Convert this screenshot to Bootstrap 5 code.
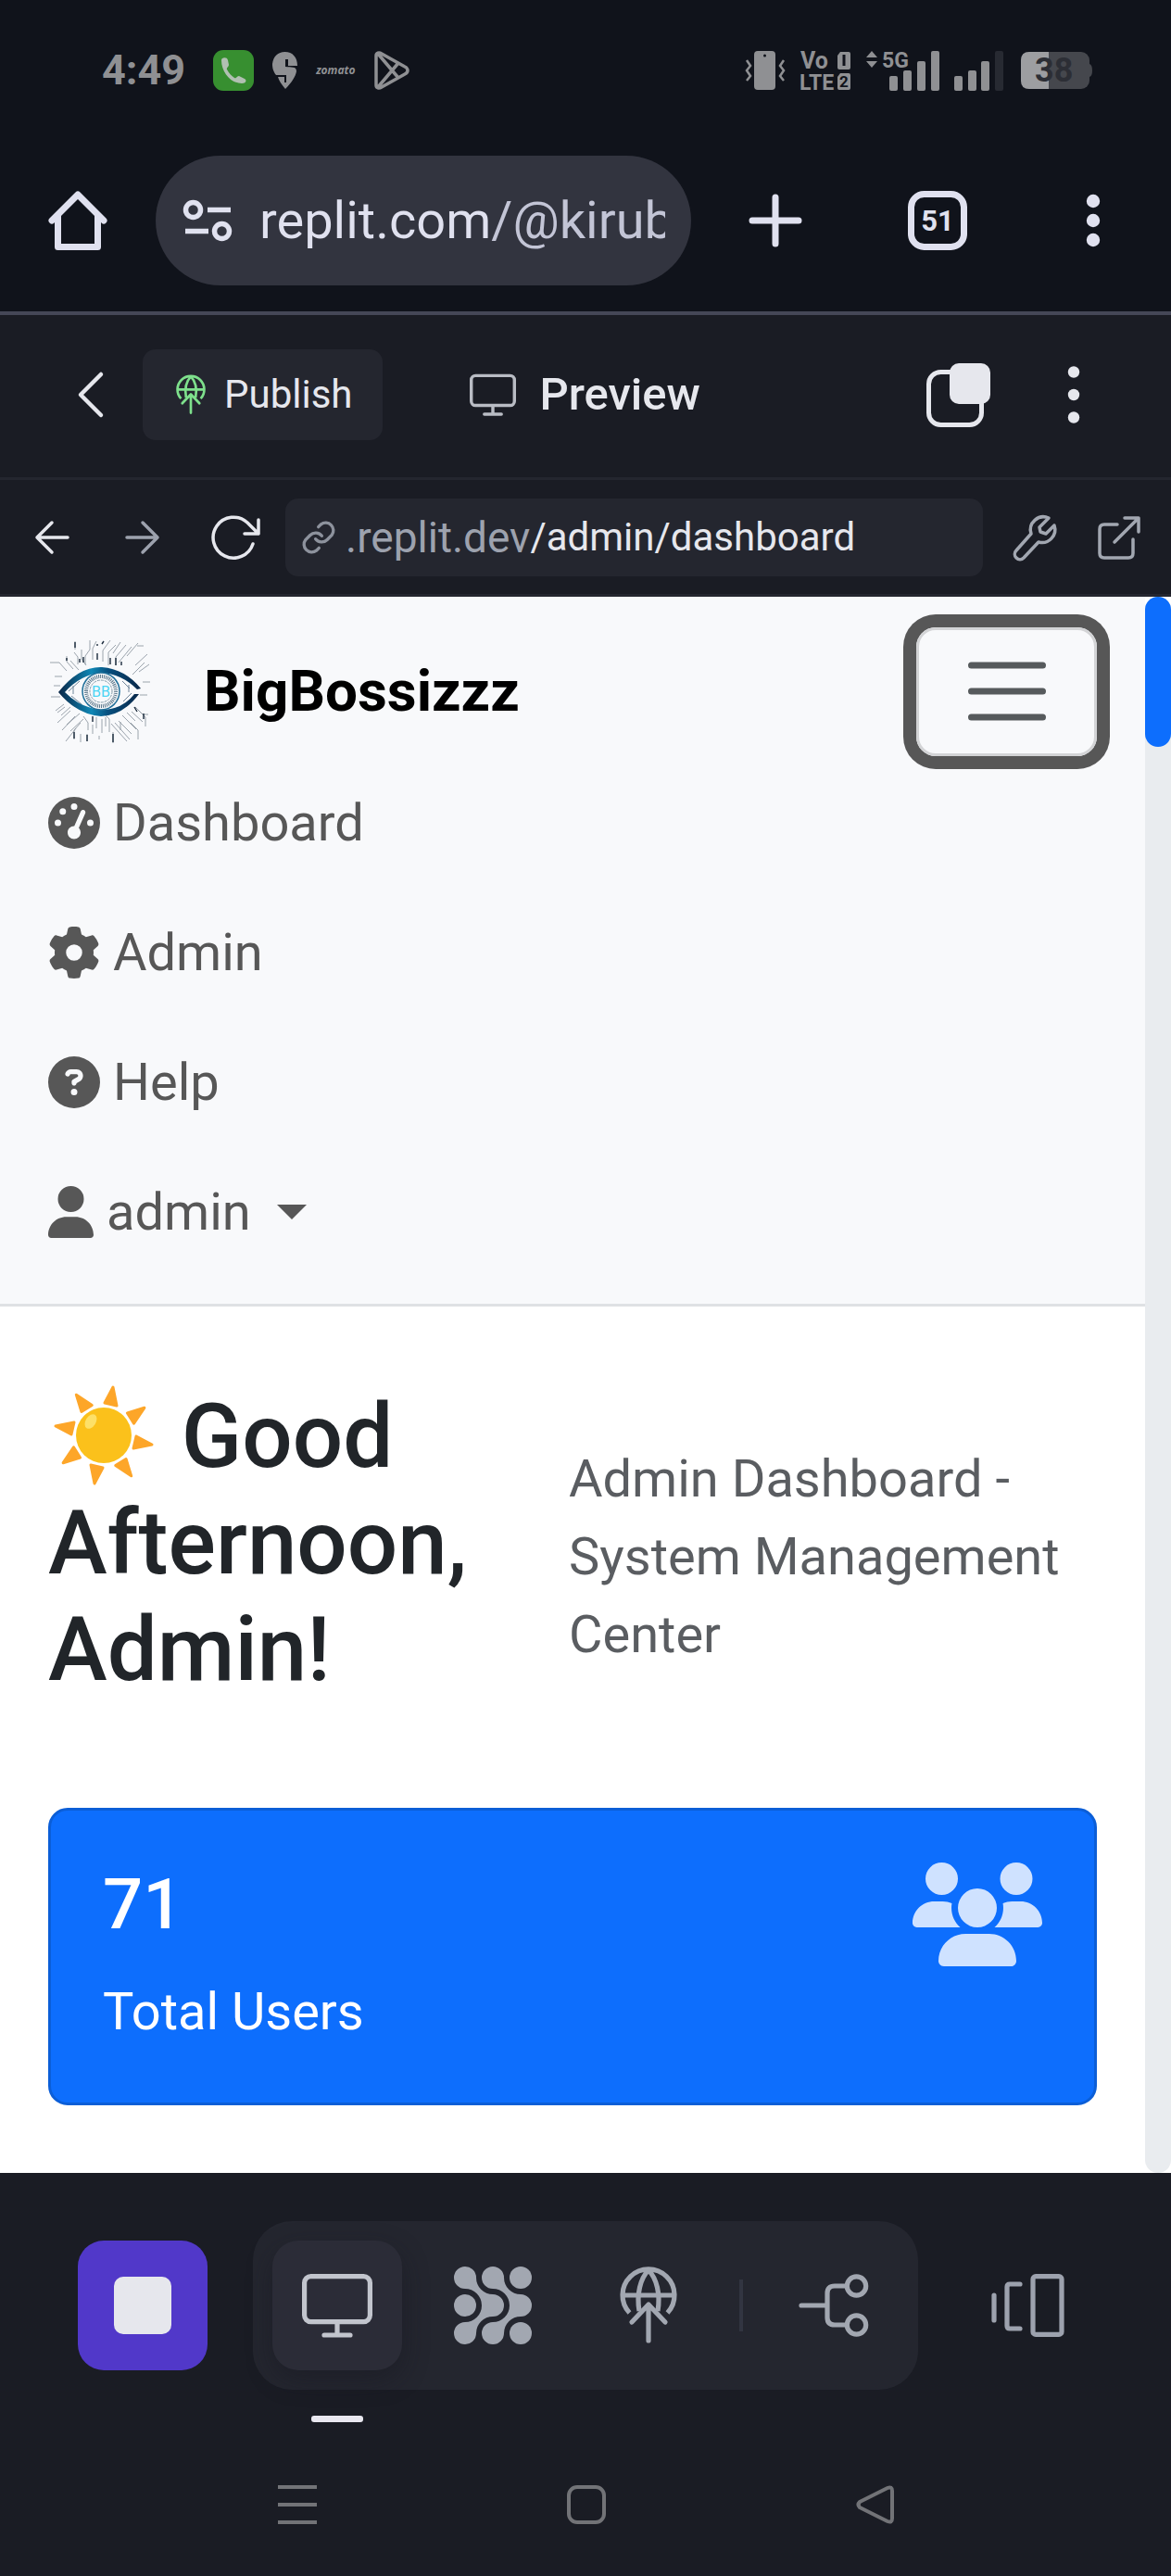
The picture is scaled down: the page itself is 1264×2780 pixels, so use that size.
<!DOCTYPE html>
<html lang="en">
<head>
<meta charset="utf-8">
<meta name="viewport" content="width=device-width, initial-scale=1">
<title>BigBossizzz – Admin Dashboard</title>
<link href="https://cdn.jsdelivr.net/npm/bootstrap@5.3.0/dist/css/bootstrap.min.css" rel="stylesheet">
<style>
  html { font-size: 56px; }
  body { font-family: Roboto, "Liberation Sans", sans-serif; background: #1a1c24; line-height: 84px; }
  svg { display: block; flex-shrink: 0; overflow: visible; }
  button { line-height: 1; }
  .bare { background: none; border: 0; padding: 0; color: inherit; display: flex; align-items: center; justify-content: center; flex-shrink: 0; }
  .slot { width: 84px; height: 84px; }

  /* phone status bar */
  .statusbar { background: #10131b; height: 140px; padding: 12px 86px 0 110px; color: #8f9093; }
  .clock { font-size: 45px; font-weight: 700; line-height: 48px; margin-right: 10px; }
  .status-left { gap: 20px; }
  .status-right { gap: 16px; }
  .tiny-brand { font-family: "Open Sans", sans-serif; font-size: 12px; line-height: 20px; font-weight: 700; font-style: italic; }

  /* browser toolbar */
  .browser { background: #10131b; height: 200px; padding: 0 42px; color: #e0e1ef; border-bottom: 4px solid #454757; }
  .browser-tools { gap: 84px; margin-left: 49px; }
  .add-tab { margin-right: 7px; }
  .omnibox { background: #32343f; height: 140px; border-radius: 70px; padding: 0 28px 0 30px; gap: 30px; margin-left: 42px; min-width: 0; }
  .omnibox input { min-width: 0; width: 100%; border: 0; outline: 0; padding: 0; font-size: 56px; line-height: 84px;
    color: transparent; background: linear-gradient(90deg, #e0e1ef 251px, #c3c5d6 251px); -webkit-background-clip: text; background-clip: text; }

  /* workspace header */
  .workspace { height: 178px; padding: 0 63px 3px 56px; color: #e6e7ed; border-bottom: 3px solid #24262f; }
  .publish { background: #24262f; border: 0; border-radius: 14px; height: 98px; padding: 0 33px 0 36px; color: #e6e7ed; font-size: 42px; gap: 20px; margin-left: 14px; }
  .preview-tab { font-size: 49px; font-weight: 500; gap: 25px; margin-left: 94px; line-height: 56px; }
  .workspace-tools { gap: 40px; }
  .address { height: 126px; padding: 0 33px 0 14px; color: #e6e7ed; border-bottom: 3px solid #24262f; }
  .address-nav { gap: 14px; margin-right: 14px; }
  .address-box { background: #24262f; border-radius: 14px; height: 84px; padding: 0 14px 0 16px; min-width: 0; }
  .address-box label { font-size: 46px; line-height: 56px; color: #9da2ae; margin-left: 9px; }
  .address-box input { min-width: 0; width: 100px; border: 0; outline: 0; background: none; padding: 0; color: #e6e7ed; font-size: 42px; line-height: 56px; }
  .address-tools { gap: 43px; margin-left: 33px; color: #a2a7b1; }
  .dim { color: #9da2ae; }

  /* previewed site */
  .site { background: #fff; }
  .site-nav { background: #f8f9fb; border-bottom: 3px solid #dfe1e4; padding: 30px 52px 29px; }
  .brand-row { height: 144px; }
  .brand-name { font-size: 62px; font-weight: 700; color: #000; gap: 56px; }
  .menu-toggle { width: 195px; height: 139px; border: 3px solid #d3d4d6; border-radius: 21px; box-shadow: 0 0 0 14px #575757; color: #565a5c; background: none; padding: 0; }
  .site-nav .nav-link { color: #575757; font-size: 56px; line-height: 84px; padding: 28px 0; gap: 14px; }
  .menu-caret { width: 0; height: 0; border: 16px solid transparent; border-top-color: #575757; border-bottom: 0; margin-left: 14px; }
  .hero { padding: 83px 52px 0; }
  .hero h1 { font-size: 96px; line-height: 115px; font-weight: 500; color: #212529; margin: 0 0 28px; width: 534px; }
  .hero h1 svg { display: inline-block; vertical-align: -21px; }
  .hero p { color: #5a5d61; margin: 0; }
  .stat { background: #0d6efd; border: 3px solid #0b5ed7; border-radius: 21px; color: #fff; margin: 85px 52px 73px; }
  .stat .card-body { padding: 56px; }
  .stat h2 { font-size: 76px; line-height: 91px; font-weight: 500; margin: 0 0 28px; }
  .scroll-track { width: 28px; background: #e9ecef; border-radius: 14px; }
  .scroll-thumb { height: 162px; background: #0d6efd; border-radius: 14px; }

  /* bottom dock */
  .dock-row { padding: 52px 84px 0; }
  .tile { width: 140px; height: 140px; border-radius: 28px; }
  .stop { background: #5138c9; }
  .stop-mark { width: 62px; height: 62px; border-radius: 10px; background: #e6e7ed; }
  .dock { background: #24262f; border-radius: 42px; padding: 21px; gap: 28px; color: #a2a7b1; }
  .dock .current { background: #2b2c37; color: #c2c5cd; box-shadow: 0 10px 28px rgba(20, 20, 30, .4); }
  .dock-rule { width: 4px; height: 56px; background: #323541; }
  .page-mark { width: 56px; height: 7px; border-radius: 3px; background: #e9e8f0; margin: 28px 0 0 336px; }
  .system-nav { padding: 68px 298px 56px 300px; color: #727377; }
</style>
<script src="https://cdn.jsdelivr.net/npm/bootstrap@5.3.0/dist/js/bootstrap.bundle.min.js"></script>
</head>
<body>

<svg width="0" height="0" class="position-absolute" aria-hidden="true">
  <symbol id="globe-up" viewBox="0 0 62 84">
    <path d="M10.500 50A28 28 0 1 1 51.500 50M3 31H59M31 4C22 13 18 30 21 48M31 4C40 13 44 30 41 48" fill="none" stroke="currentColor" stroke-width="5.200"/>
    <path d="M13 60L31 41L49 60M31 42V80" fill="none" stroke="currentColor" stroke-width="5.200" stroke-linecap="round" stroke-linejoin="round"/>
  </symbol>
  <symbol id="monitor" viewBox="0 0 76 70">
    <g fill="none" stroke="currentColor" stroke-width="5.200" stroke-linecap="round"><rect x="2.600" y="3.600" width="70.800" height="49" rx="7"/><path d="M38 53V67M24 67H52"/></g>
  </symbol>
</svg>

<div class="statusbar d-flex align-items-center justify-content-between">
  <div class="status-left d-flex align-items-center">
    <span class="clock">4:49</span>
    <svg width="44" height="44" viewBox="0 0 44 44"><rect width="44" height="44" rx="11" fill="#378f30"/><path d="M9 11C9 8 15 7 16 11L17 16C17 18 14 19 15 21C17 25 20 28 23 30C25 31 26 28 28 28L34 31C37 33 35 36 31 36C19 36 9 24 9 11Z" fill="#b1c0b2"/></svg>
    <svg width="27" height="40" viewBox="0 0 27 40"><path d="M13.500 0C22 0 27 6 27 15H17V8H14V16C20 17 26 15 26 21C25 27 20 34 14 40C10 35 7 31 6 27H13V33H15V25H4C0 20 0 15 0 13C1 5 6 0 13.500 0Z" fill="currentColor"/></svg>
    <span class="tiny-brand">zomato</span>
    <svg width="38" height="42" viewBox="0 0 38 42"><path d="M2 5C2 2 5 1 8 3L33 17C37 19 37 23 33 25L8 39C5 41 2 40 2 37ZM4 3L26 29M4 39L26 13" fill="none" stroke="currentColor" stroke-width="3.500"/></svg>
  </div>
  <div class="status-right d-flex align-items-center">
    <svg width="44" height="44" viewBox="0 0 44 44"><rect x="10" y="1" width="23" height="42" rx="4" fill="currentColor"/><circle cx="21.500" cy="6" r="1.500" fill="#10131b"/><path d="M2 11L6 17L2 22L6 28L2 33M42 11L38 17L42 22L38 28L42 33" fill="none" stroke="currentColor" stroke-width="2.500"/></svg>
    <svg width="54" height="44" viewBox="0 0 54 44"><g font-family="Roboto, sans-serif" font-weight="700" fill="currentColor"><text x="0" y="20" font-size="25">Vo</text><text x="-1" y="43" font-size="23">LTE</text></g><path d="M43 2H52Q54 2 54 4V19Q54 21 52 21H42Q40 21 40 19V6ZM43 25H52Q54 25 54 27V41Q54 43 52 43H42Q40 43 40 41V29Z" fill="currentColor"/><path d="M47 5V17" stroke="#10131b" stroke-width="3"/><text x="42" y="40" font-family="Roboto, sans-serif" font-weight="700" font-size="17" fill="#10131b">2</text></svg>
    <svg width="80" height="44" viewBox="0 0 80 44" fill="currentColor"><path d="M7 1L13 8H1ZM7 19L13 12H1Z"/><text x="18" y="19" font-family="Roboto, sans-serif" font-weight="700" font-size="23">5G</text><rect x="26" y="28" width="9" height="16" rx="2"/><rect x="41" y="22" width="9" height="22" rx="2"/><rect x="56" y="12" width="9" height="32" rx="2"/><rect x="71" y="1" width="9" height="43" rx="2"/></svg>
    <svg width="54" height="44" viewBox="0 0 54 44" fill="currentColor"><rect x="0" y="28" width="9" height="16" rx="2"/><rect x="15" y="22" width="9" height="22" rx="2"/><rect x="29" y="12" width="9" height="32" rx="2"/><rect x="44" y="1" width="9" height="43" rx="2" fill="#272a32"/></svg>
    <svg width="78" height="42" viewBox="0 0 78 42"><rect x="2" y="1" width="74" height="40" rx="9" fill="#45474d"/><path d="M76 14Q79 15 79 21T76 28Z" fill="#45474d"/><path d="M11 1H32V41H11Q2 41 2 32V10Q2 1 11 1Z" fill="#9d9ea1"/><text x="17" y="33" font-family="Roboto, sans-serif" font-weight="700" font-size="36" fill="#2c2e35">38</text></svg>
  </div>
</div>

<div class="browser d-flex align-items-center">
  <button class="bare slot" aria-label="Home"><svg width="64" height="66" viewBox="0 0 64 66" fill="none" stroke="currentColor" stroke-width="7" stroke-linecap="round" stroke-linejoin="round"><path d="M4 33L32 5L60 33M10.500 28V61.500H53.500V28"/></svg></button>
  <div class="omnibox d-flex align-items-center flex-grow-1">
    <svg width="52" height="46" viewBox="0 0 52 46" fill="none" stroke="#e0e1ef" stroke-width="5.500"><circle cx="10.500" cy="11.500" r="8"/><circle cx="41.500" cy="34.500" r="8"/><path d="M26 11.500H51M2 34.500H27"/></svg>
    <input type="text" aria-label="Web address" value="replit.com/@kirub">
  </div>
  <div class="browser-tools d-flex align-items-center">
    <button class="bare slot add-tab" aria-label="New tab"><svg width="58" height="58" viewBox="0 0 58 58" stroke="currentColor" stroke-width="7" stroke-linecap="round"><path d="M29 4V54M4 29H54"/></svg></button>
    <button class="bare slot" aria-label="Open tabs"><svg width="64" height="64" viewBox="0 0 64 64"><rect x="3.500" y="3.500" width="57" height="57" rx="14" fill="none" stroke="currentColor" stroke-width="7"/><text x="32" y="43" text-anchor="middle" font-family="Roboto, sans-serif" font-size="31" font-weight="700" fill="currentColor">51</text></svg></button>
    <button class="bare slot" aria-label="Browser menu"><svg width="16" height="58" viewBox="0 0 16 58" fill="currentColor"><circle cx="8" cy="8" r="7.200"/><circle cx="8" cy="29" r="7.200"/><circle cx="8" cy="50" r="7.200"/></svg></button>
  </div>
</div>

<div class="workspace d-flex align-items-center">
  <button class="bare slot" aria-label="Back"><svg width="28" height="50" viewBox="0 0 28 50" fill="none" stroke="currentColor" stroke-width="4.500" stroke-linecap="round" stroke-linejoin="round"><path d="M25 3L3 25L25 47"/></svg></button>
  <button class="publish d-flex align-items-center"><svg width="32" height="44" color="#7ee08c"><use href="#globe-up"/></svg>Publish</button>
  <div class="preview-tab d-flex align-items-center"><svg width="50" height="48" color="#b9bcc4"><use href="#monitor"/></svg>Preview</div>
  <div class="workspace-tools d-flex align-items-center ms-auto">
    <button class="bare slot" aria-label="Windows"><svg width="70" height="70" viewBox="0 0 70 70"><rect x="2.500" y="10.500" width="57" height="57" rx="13" fill="none" stroke="currentColor" stroke-width="5"/><rect x="25" y="1" width="44" height="44" rx="10" fill="currentColor"/></svg></button>
    <button class="bare slot" aria-label="Workspace menu"><svg width="14" height="62" viewBox="0 0 14 62" fill="currentColor"><circle cx="7" cy="6.500" r="6.200"/><circle cx="7" cy="31" r="6.200"/><circle cx="7" cy="55.500" r="6.200"/></svg></button>
  </div>
</div>

<div class="address d-flex align-items-center">
  <div class="address-nav d-flex">
    <button class="bare slot" aria-label="Go back"><svg width="38" height="38" viewBox="0 0 38 38" fill="none" stroke="currentColor" stroke-width="3.500" stroke-linecap="round" stroke-linejoin="round"><path d="M36 19H3M19 3L3 19L19 35"/></svg></button>
    <button class="bare slot dim" aria-label="Go forward"><svg width="38" height="38" viewBox="0 0 38 38" fill="none" stroke="currentColor" stroke-width="3.500" stroke-linecap="round" stroke-linejoin="round"><path d="M2 19H35M19 3L35 19L19 35"/></svg></button>
    <button class="bare slot" aria-label="Reload"><svg width="52" height="56" viewBox="-2 -4 52 56" fill="none" stroke="currentColor" stroke-width="3.500" stroke-linecap="round" stroke-linejoin="round"><path d="M45 31A22 22 0 1 1 39 8L51 20M51 5V20H36"/></svg></button>
  </div>
  <div class="address-box d-flex align-items-center flex-grow-1">
    <svg width="40" height="40" viewBox="0 0 24 24" fill="none" stroke="#8d929d" stroke-width="2" stroke-linecap="round"><path d="M10 13a5 5 0 0 0 7.500 .5l3-3a5 5 0 0 0-7-7l-1.700 1.700M14 11a5 5 0 0 0-7.500-.5l-3 3a5 5 0 0 0 7 7l1.700-1.700"/></svg>
    <label for="path">.replit.dev</label><input id="path" class="flex-grow-1" type="text" value="/admin/dashboard">
  </div>
  <div class="address-tools d-flex align-items-center">
    <button class="bare" aria-label="Developer tools"><svg width="48" height="50" viewBox="0 0 48 50" fill="none" stroke="currentColor" stroke-width="3.500" stroke-linejoin="round"><path d="M38 4A14 14 0 0 0 19 21L3 39A5.500 5.500 0 0 0 11 47L27 30A14 14 0 0 0 44 12L35 21L29 19L28 14Z"/></svg></button>
    <button class="bare" aria-label="Open in new window"><svg width="46" height="48" viewBox="0 0 46 48" fill="none" stroke="currentColor" stroke-width="3.500" stroke-linecap="round" stroke-linejoin="round"><path d="M21 10H7Q2 10 2 15V41Q2 46 7 46H33Q38 46 38 41V26M18 29L44 3M29 3H44V18"/></svg></button>
  </div>
</div>

<div class="site d-flex">
  <main class="flex-grow-1">
    <nav class="site-nav">
      <div class="brand-row d-flex align-items-center justify-content-between">
        <a href="#" class="brand-name d-flex align-items-center text-decoration-none">
          <svg width="112" height="112" viewBox="0 0 112 112" fill="none">
            <defs><linearGradient id="lid" x1="0" x2="1"><stop offset="0" stop-color="#0a2647"/><stop offset=".4" stop-color="#0f87b5"/><stop offset=".6" stop-color="#07507f"/><stop offset="1" stop-color="#0a2647"/></linearGradient></defs>
            <g stroke="#596775" stroke-width=".9" opacity=".65">
              <path d="M29 2V11M45 1V11L40 18V27M52 2L48 10V22M67 1L59 12V24M73 6L65 14V28M78 3L70 15M84 6L73 19V28M90 8L76 25M97 4L85 18M103 7H96M107 16L94 28M109 27L98 35M2 25H12L20 34M20 18V24L27 32M28 14L32 19V27M36 11V21L41 28M24 23L33 33M104 25L91 38M110 46H102M107 60H99M3 62H13M6 50H13M7 40H15M108 81H102L94 73"/>
              <path d="M19 110L30 96M28 108V98L35 90M35 111V102M42 110V102M43 98V90L38 83M48 102V92M52 96V84M58 101V86M62 94V84M66 100V86L62 82M70 112V100M85 110L68 91M88 108L72 90M90 102L76 88M95 97L80 82M102 89L90 78M105 94V84L97 76M15 98L29 83M10 90L24 77M14 82L24 73M20 92L34 80M24 99L38 86M8 77L17 70M55 108V104M78 98V89M97 108V98L89 90M85 79L94 88M18 73L10 79"/>
            </g>
            <g stroke="#1b2b3c" stroke-width="1.400"><path d="M29 3V9M67 20V27M73 20V28M53 15V22M20 20V23M34 21V25M28 100V107M42 103V110M70 102V111M93 73L96 78M48 83V89M53 5V7M79 24V28M103 80V86M60 2L58 5M38 19V25"/></g>
            <path d="M11 57Q33 29 58 30Q83 32 100 53L96 54Q79 37 57 36Q35 38 18 57Q35 74 57 76Q80 76 93 59H98Q81 82 57 83Q31 81 11 57Z" fill="url(#lid)"/>
            <circle cx="57" cy="56" r="20" stroke="#206f99" stroke-width="1.500"/>
            <circle cx="57" cy="56" r="16" stroke="#577488" stroke-width="4" stroke-dasharray="1 1"/>
            <circle cx="57" cy="56" r="12" stroke="#8199a8" stroke-width="1" stroke-dasharray="3 1"/>
            <path d="M22 56L34 45M25 61L36 70M80 45L88 53M81 67L90 58M27 50V59M87 49V57" stroke="#71869a"/>
            <text x="57" y="62" text-anchor="middle" font-family="Roboto, sans-serif" font-size="16" font-weight="400" fill="#4bd5f4">BB</text>
          </svg>
          BigBossizzz
        </a>
        <button class="menu-toggle d-flex align-items-center justify-content-center" aria-label="Toggle navigation" aria-expanded="true"><svg width="86" height="64" viewBox="0 0 86 64" stroke="currentColor" stroke-width="7" stroke-linecap="round"><path d="M4.500 4H81.500M4.500 32H81.500M4.500 60H81.500"/></svg></button>
      </div>
      <ul class="nav flex-column">
        <li class="nav-item"><a class="nav-link d-flex align-items-center" href="#"><svg width="56" height="56" viewBox="0 0 512 512" fill="currentColor"><path d="M0 256a256 256 0 1 1 512 0A256 256 0 1 1 0 256zM288 96a32 32 0 1 0 -64 0 32 32 0 1 0 64 0zM256 416c35.300 0 64-28.700 64-64c0-17.400-6.900-33.100-18.100-44.600L366 161.700c5.300-12.100-.2-26.300-12.300-31.600s-26.300 .2-31.600 12.300L257.900 288c-.6 0-1.300 0-1.900 0c-35.300 0-64 28.700-64 64s28.700 64 64 64zM176 144a32 32 0 1 0 -64 0 32 32 0 1 0 64 0zM96 288a32 32 0 1 0 0-64 32 32 0 1 0 0 64zm352-32a32 32 0 1 0 -64 0 32 32 0 1 0 64 0z"/></svg>Dashboard</a></li>
        <li class="nav-item"><a class="nav-link d-flex align-items-center" href="#"><svg width="56" height="56" viewBox="0 0 512 512" fill="currentColor"><path d="M495.900 166.600c3.200 8.700 .5 18.400-6.400 24.600l-43.300 39.400c1.100 8.300 1.700 16.800 1.700 25.400s-.6 17.100-1.700 25.400l43.300 39.400c6.900 6.200 9.600 15.900 6.400 24.600c-4.400 11.900-9.700 23.300-15.800 34.300l-4.700 8.100c-6.600 11-14 21.400-22.100 31.200c-5.900 7.200-15.700 9.600-24.500 6.800l-55.700-17.700c-13.400 10.300-28.200 18.900-44 25.400l-12.500 57.100c-2 9.100-9 16.300-18.200 17.800c-13.800 2.300-28 3.500-42.500 3.500s-28.700-1.200-42.500-3.500c-9.200-1.500-16.200-8.700-18.200-17.800l-12.500-57.100c-15.800-6.500-30.600-15.100-44-25.400L83.100 425.900c-8.800 2.800-18.600 .3-24.500-6.800c-8.100-9.800-15.500-20.200-22.100-31.200l-4.700-8.100c-6.100-11-11.400-22.400-15.800-34.300c-3.200-8.700-.5-18.400 6.400-24.600l43.300-39.400C64.600 273.100 64 264.600 64 256s.6-17.100 1.700-25.400L22.400 191.200c-6.900-6.200-9.600-15.900-6.400-24.600c4.400-11.900 9.700-23.300 15.800-34.300l4.700-8.100c6.600-11 14-21.400 22.100-31.200c5.900-7.200 15.700-9.600 24.500-6.800l55.700 17.700c13.400-10.300 28.200-18.900 44-25.400l12.500-57.100c2-9.100 9-16.300 18.200-17.800C227.300 1.200 241.500 0 256 0s28.700 1.200 42.500 3.500c9.200 1.500 16.200 8.700 18.200 17.800l12.500 57.100c15.800 6.500 30.600 15.100 44 25.400l55.700-17.700c8.800-2.800 18.600-.3 24.500 6.800c8.100 9.800 15.500 20.200 22.100 31.200l4.700 8.100c6.100 11 11.400 22.400 15.800 34.300zM256 336a80 80 0 1 0 0-160 80 80 0 1 0 0 160z"/></svg>Admin</a></li>
        <li class="nav-item"><a class="nav-link d-flex align-items-center" href="#"><svg width="56" height="56" viewBox="0 0 512 512" fill="currentColor"><path d="M256 512A256 256 0 1 0 256 0a256 256 0 1 0 0 512zM169.800 165.300c7.900-22.300 29.100-37.300 52.800-37.300h58.300c34.900 0 63.100 28.300 63.100 63.100c0 22.600-12.100 43.500-31.700 54.800L280 264.400c-.2 13-10.900 23.600-24 23.600c-13.300 0-24-10.700-24-24V250.500c0-8.600 4.600-16.500 12.100-20.800l44.300-25.400c4.700-2.700 7.600-7.700 7.600-13.100c0-8.400-6.800-15.100-15.100-15.100H222.600c-3.400 0-6.400 2.100-7.500 5.300l-.4 1.200c-4.400 12.500-18.200 19-30.600 14.600s-19-18.200-14.600-30.600l.4-1.200zM224 352a32 32 0 1 1 64 0 32 32 0 1 1 -64 0z"/></svg>Help</a></li>
        <li class="nav-item"><a class="nav-link d-flex align-items-center" href="#" role="button"><svg width="49" height="56" viewBox="0 0 448 512" fill="currentColor"><path d="M224 256A128 128 0 1 0 224 0a128 128 0 1 0 0 256zm-45.700 48C79.800 304 0 383.800 0 482.300C0 498.700 13.300 512 29.700 512H418.300c16.400 0 29.700-13.300 29.700-29.700C448 383.800 368.200 304 269.700 304H178.300z"/></svg>admin<span class="menu-caret"></span></a></li>
      </ul>
    </nav>

    <header class="hero d-flex align-items-center">
      <h1 class="flex-shrink-0"><svg width="120" height="110" viewBox="0 0 120 110" role="img" aria-label="Sun"><g fill="#fda629" stroke="#fda629" stroke-width="3" stroke-linejoin="round"><path id="ray" d="M70 3L74 23L61 20Z"/><use href="#ray" transform="rotate(45 60 55)"/><use href="#ray" transform="rotate(90 60 55)"/><use href="#ray" transform="rotate(135 60 55)"/><use href="#ray" transform="rotate(180 60 55)"/><use href="#ray" transform="rotate(225 60 55)"/><use href="#ray" transform="rotate(270 60 55)"/><use href="#ray" transform="rotate(315 60 55)"/></g><circle cx="60" cy="55" r="30" fill="#fbc11b"/><ellipse cx="46" cy="40" rx="5.500" ry="8.500" transform="rotate(32 46 40)" fill="#fde068"/></svg> Good Afternoon, Admin!</h1>
      <p class="ms-2">Admin Dashboard - System Management Center</p>
    </header>

    <section class="stat card">
      <div class="card-body d-flex justify-content-between align-items-start">
        <div><h2>71</h2><div>Total Users</div></div>
        <svg width="140" height="112" viewBox="0 0 640 512" fill="#cfe2ff"><path d="M144 0a80 80 0 1 1 0 160A80 80 0 1 1 144 0zM512 0a80 80 0 1 1 0 160A80 80 0 1 1 512 0zM0 298.700C0 239.800 47.800 192 106.700 192h42.700c15.900 0 31 3.500 44.600 9.700c-1.300 7.200-1.900 14.700-1.900 22.300c0 38.200 16.800 72.500 43.300 96c-.2 0-.4 0-.7 0H21.300C9.600 320 0 310.400 0 298.700zM405.300 320c-.2 0-.4 0-.7 0c26.600-23.500 43.300-57.800 43.300-96c0-7.600-.7-15-1.900-22.300c13.600-6.300 28.700-9.700 44.600-9.700h42.700C592.200 192 640 239.800 640 298.700c0 11.800-9.600 21.300-21.300 21.300H405.300zM224 224a96 96 0 1 1 192 0 96 96 0 1 1 -192 0zM128 485.300C128 411.700 187.700 352 261.300 352H378.700C452.300 352 512 411.700 512 485.300c0 14.700-11.900 26.700-26.700 26.700H154.700c-14.700 0-26.700-11.900-26.700-26.700z"/></svg>
      </div>
    </section>
  </main>
  <div class="scroll-track flex-shrink-0"><div class="scroll-thumb"></div></div>
</div>

<footer>
  <div class="dock-row d-flex align-items-center justify-content-between">
    <button class="bare tile stop" aria-label="Stop"><span class="stop-mark"></span></button>
    <div class="dock d-flex align-items-center">
      <button class="bare tile current" aria-label="Preview"><svg width="76" height="70"><use href="#monitor"/></svg></button>
      <button class="bare tile" aria-label="Agent"><svg width="84" height="84" viewBox="0 0 84 84" fill="currentColor"><path id="blob" d="M12 0A12 12 0 0 1 24 12A18 18 0 0 0 42 30A12 12 0 0 1 42 54A18 18 0 0 0 24 72A12 12 0 1 1 12 60A18 18 0 0 0 12 24A12 12 0 0 1 12 0Z"/><use href="#blob" x="30"/><circle cx="72" cy="12" r="12"/><circle cx="12" cy="42" r="12"/><circle cx="72" cy="72" r="12"/></svg></button>
      <button class="bare tile" aria-label="Publishing"><svg width="62" height="84"><use href="#globe-up"/></svg></button>
      <span class="dock-rule"></span>
      <button class="bare tile" aria-label="Branches"><svg width="76" height="68" viewBox="0 0 76 68" fill="none" stroke="currentColor" stroke-width="5.200" stroke-linecap="round"><path d="M3 34H31M51 13H39Q31 13 31 21V47Q31 55 39 55H51"/><circle cx="62.500" cy="13" r="10.200"/><circle cx="62.500" cy="55" r="10.200"/></svg></button>
    </div>
    <button class="bare tile dim" aria-label="Tabs"><svg width="80" height="68" viewBox="0 0 80 68" fill="none" stroke="currentColor" stroke-width="5.200" stroke-linecap="round" stroke-linejoin="round"><path d="M3 23V50M31 11H20Q17 11 17 14V56Q17 59 20 59H31"/><rect x="45" y="2.600" width="31" height="62.800" rx="3"/></svg></button>
  </div>
  <div class="page-mark"></div>
  <div class="system-nav d-flex justify-content-between">
    <button class="bare" aria-label="Recent apps"><svg width="42" height="42" viewBox="0 0 42 42" stroke="currentColor" stroke-width="4"><path d="M0 2H42M0 21H42M0 40H42"/></svg></button>
    <button class="bare" aria-label="Home screen"><svg width="42" height="42" viewBox="0 0 42 42" fill="none" stroke="currentColor" stroke-width="4"><rect x="2" y="2" width="38" height="38" rx="9"/></svg></button>
    <button class="bare" aria-label="System back"><svg width="42" height="42" viewBox="0 0 42 42" fill="none" stroke="currentColor" stroke-width="4" stroke-linejoin="round"><path d="M34 3L4 18Q1 21 4 24L34 39Q39 41 39 36V6Q39 1 34 3Z"/></svg></button>
  </div>
</footer>
</body>
</html>
